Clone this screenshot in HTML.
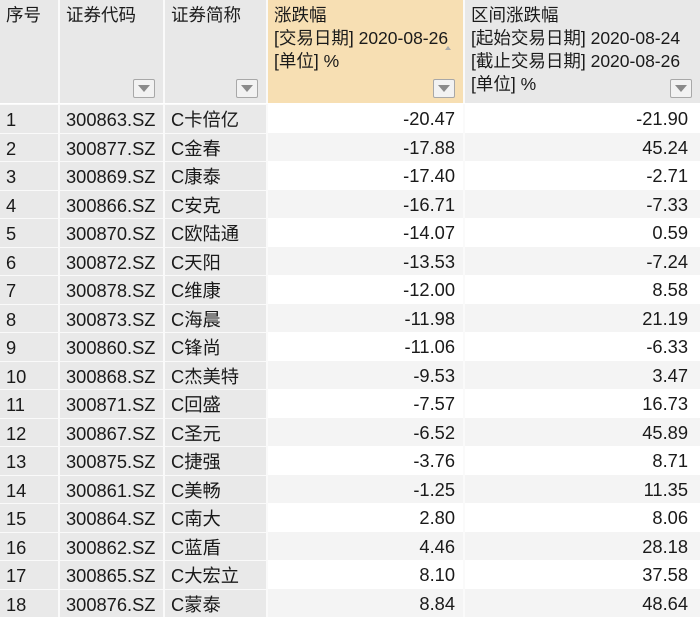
<!DOCTYPE html><html><head><meta charset="utf-8"><style>
*{margin:0;padding:0;box-sizing:border-box}
body{width:700px;height:621px;overflow:hidden;background:#fff;font-family:"Liberation Sans","Noto Sans CJK SC",sans-serif;font-size:18.3px;color:#1a1a1a;position:relative}
.h{position:absolute;top:0;height:103px;background:#e8e8e8;padding:4px 6px;line-height:23px;border-right:2px solid #fafafa;font-size:17.5px}
.dd{position:absolute;right:8px;bottom:5px;width:22px;height:19px;border:1px solid #a8a8a8;background:#f2f2f2;border-radius:2px}
.dd:after{content:"";position:absolute;left:4px;top:5px;border-left:6px solid transparent;border-right:6px solid transparent;border-top:7px solid #8a8a8a}
.r{position:absolute;left:0;width:700px;height:28.5px;line-height:29px}
.c{position:absolute;top:0;height:100%;padding-left:6px;white-space:nowrap}
.g{background:#e9e9e9;border-right:2px solid #fafafa;border-top:1px solid #fafafa}
.n{text-align:right;padding-right:8px}
</style></head><body>
<div class="h" style="left:0;width:60px">序号</div>
<div class="h" style="left:60px;width:105px">证券代码<div class="dd"></div></div>
<div class="h" style="left:165px;width:103px">证券简称<div class="dd"></div></div>
<div class="h" style="left:268px;width:197px;background:#f7dfb3">涨跌幅<br>[交易日期] 2020-08-26<br>[单位] %<div class="dd"></div><div style="position:absolute;right:12px;top:46px;border-left:3px solid transparent;border-right:3px solid transparent;border-bottom:4px solid #aaa"></div></div>
<div class="h" style="left:465px;width:235px;border-right:none">区间涨跌幅<br>[起始交易日期] 2020-08-24<br>[截止交易日期] 2020-08-26<br>[单位] %<div class="dd"></div></div>
<div id="rows"></div>
<script>
var d=[["300863.SZ","C卡倍亿","-20.47","-21.90"],["300877.SZ","C金春","-17.88","45.24"],["300869.SZ","C康泰","-17.40","-2.71"],["300866.SZ","C安克","-16.71","-7.33"],["300870.SZ","C欧陆通","-14.07","0.59"],["300872.SZ","C天阳","-13.53","-7.24"],["300878.SZ","C维康","-12.00","8.58"],["300873.SZ","C海晨","-11.98","21.19"],["300860.SZ","C锋尚","-11.06","-6.33"],["300868.SZ","C杰美特","-9.53","3.47"],["300871.SZ","C回盛","-7.57","16.73"],["300867.SZ","C圣元","-6.52","45.89"],["300875.SZ","C捷强","-3.76","8.71"],["300861.SZ","C美畅","-1.25","11.35"],["300864.SZ","C南大","2.80","8.06"],["300862.SZ","C蓝盾","4.46","28.18"],["300865.SZ","C大宏立","8.10","37.58"],["300876.SZ","C蒙泰","8.84","48.64"]];
var h="";d.forEach(function(x,i){var bg=i%2?"#f4f4f4":"#fff";h+='<div class="r" style="top:'+(104+i*28.5)+'px;background:'+bg+'"><div class="c g" style="left:0;width:60px">'+(i+1)+'</div><div class="c g" style="left:60px;width:105px">'+x[0]+'</div><div class="c g" style="left:165px;width:103px">'+x[1]+'</div><div class="c n" style="left:268px;width:197px;border-right:2px solid #fafafa">'+x[2]+'</div><div class="c n" style="left:465px;width:235px;padding-right:12px">'+x[3]+'</div></div>'});
document.getElementById("rows").innerHTML=h;
</script>
</body></html>
